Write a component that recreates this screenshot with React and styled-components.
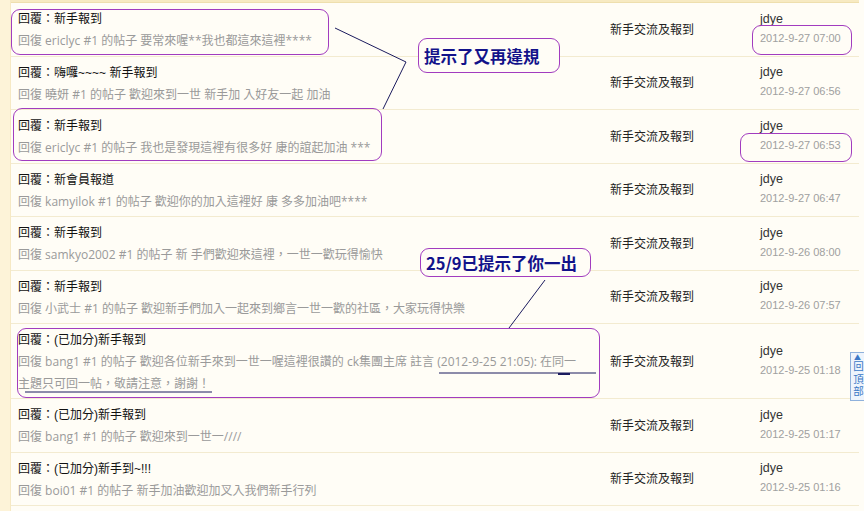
import styled, { createGlobalStyle } from 'styled-components'

const GlobalStyle = createGlobalStyle`
  html, body {
    margin: 0;
    padding: 0;
    background: #fffdf6;
  }
  body {
    font-family: 'Liberation Sans', 'Noto Sans CJK TC', sans-serif;
    font-size: 12px;
  }
`

const threads = [
  {
    title: '新手報到',
    summary: '回復 ericlyc #1 的帖子 要常來喔**我也都這來這裡****',
    date: '2012-9-27 07:00',
  },
  {
    title: '嗨囉~~~~ 新手報到',
    summary: '回復 曉妍 #1 的帖子 歡迎來到一世 新手加 入好友一起 加油',
    date: '2012-9-27 06:56',
  },
  {
    title: '新手報到',
    summary: '回復 ericlyc #1 的帖子 我也是發現這裡有很多好 康的誼起加油 ***',
    date: '2012-9-27 06:53',
  },
  {
    title: '新會員報道',
    summary: '回復 kamyilok #1 的帖子 歡迎你的加入這裡好 康 多多加油吧****',
    date: '2012-9-27 06:47',
  },
  {
    title: '新手報到',
    summary: '回復 samkyo2002 #1 的帖子 新 手們歡迎來這裡，一世一歡玩得愉快',
    date: '2012-9-26 08:00',
  },
  {
    title: '新手報到',
    summary: '回復 小武士 #1 的帖子 歡迎新手們加入一起來到鄉言一世一歡的社區，大家玩得快樂',
    date: '2012-9-26 07:57',
  },
  {
    title: '(已加分)新手報到',
    summary: [
      '回復 bang1 #1 的帖子 歡迎各位新手來到一世一喔這裡很讚的 ck集團主席 註言 (2012-9-25 21:05): 在同一',
      '主題只可回一帖，敬請注意，謝謝！',
    ],
    date: '2012-9-25 01:18',
  },
  {
    title: '(已加分)新手報到',
    summary: '回復 bang1 #1 的帖子 歡迎來到一世一////',
    date: '2012-9-25 01:17',
  },
  {
    title: '(已加分)新手到~!!!',
    summary: '回復 boi01 #1 的帖子 新手加油歡迎加叉入我們新手行列',
    date: '2012-9-25 01:16',
  },
]

// annotation marks drawn over the list (page coordinates)
const marks = [
  { x: 11, y: 9, w: 318, h: 46 },
  { x: 13, y: 108, w: 369, h: 53 },
  { x: 752, y: 25, w: 100, h: 30 },
  { x: 740, y: 133, w: 112, h: 29 },
  { x: 17, y: 328, w: 583, h: 70 },
]

export default function App() {
  return (
    <Page>
      <GlobalStyle />
      <LeftStrip />
      <Main>
        <TopBar />
        {threads.map((t, i) => (
          <Row key={i}>
            <TopicCell>
              <Title>回覆：{t.title}</Title>
              {Array.isArray(t.summary) ? (
                t.summary.map((line, j) => <Summary key={j}>{line}</Summary>)
              ) : (
                <Summary>{t.summary}</Summary>
              )}
            </TopicCell>
            <ForumCell>新手交流及報到</ForumCell>
            <AuthorCell>
              <Author>jdye</Author>
              <PostDate>{t.date}</PostDate>
            </AuthorCell>
          </Row>
        ))}
      </Main>

      <Overlay>
        {marks.map((m, i) => (
          <Mark key={i} $x={m.x} $y={m.y} $w={m.w} $h={m.h} />
        ))}
        <Callout $x={418} $y={38} $w={142} $h={35}>
          提示了又再違規
        </Callout>
        <Callout $x={420} $y={248} $w={171} $h={29}>
          25/9已提示了你一出
        </Callout>
        <Lines width="864" height="511" viewBox="0 0 864 511">
          <polyline points="335,28 406,62 383,109" />
          <line x1="545" y1="280" x2="509" y2="328" />
          <line x1="439" y1="373" x2="596" y2="373" />
          <line x1="558" y1="374" x2="570" y2="374" strokeWidth="2" />
          <line x1="25" y1="392" x2="212" y2="392" />
        </Lines>
      </Overlay>

      <BackTop>
        <Arrow>▲</Arrow>
        <BackLabel>回頂部</BackLabel>
      </BackTop>
    </Page>
  )
}

const Page = styled.div`
  position: relative;
  display: flex;
  width: 864px;
  height: 511px;
  overflow: hidden;
  background: #fffdf6;
`

const LeftStrip = styled.div`
  width: 10px;
  flex-shrink: 0;
  background: #fdf3d8;
  border-right: 1px solid #f6e9c4;
`

const Main = styled.div`
  width: 848px;
  display: flex;
  flex-direction: column;
`

const TopBar = styled.div`
  height: 2px;
  background: #f7eac2;
  border-bottom: 1px solid #eedfae;
`

const Row = styled.div`
  display: grid;
  grid-template-columns: 599px 150px 1fr;
  border-bottom: 1px solid #f3ebd0;
`

const TopicCell = styled.div`
  padding: 5px 0 4px 7px;
`

const Title = styled.div`
  line-height: 22px;
  color: #111;
  white-space: nowrap;
`

const Summary = styled.div`
  font-family: 'Open Sans', 'Noto Sans CJK TC', sans-serif;
  line-height: 21.5px;
  color: #9a9a9a;
  white-space: nowrap;
`

const ForumCell = styled.div`
  display: flex;
  align-items: center;
  color: #222;
  padding-bottom: 2px;
`

const AuthorCell = styled.div`
  display: flex;
  flex-direction: column;
  justify-content: center;
  padding-bottom: 2px;
`

const Author = styled.div`
  line-height: 19px;
  color: #333;
  font-size: 12.5px;
`

const PostDate = styled.div`
  line-height: 18px;
  color: #a0a0a0;
  font-size: 11px;
`

const Overlay = styled.div`
  position: absolute;
  inset: 0;
  pointer-events: none;
`

const Mark = styled.div`
  position: absolute;
  left: ${(p) => p.$x}px;
  top: ${(p) => p.$y}px;
  width: ${(p) => p.$w}px;
  height: ${(p) => p.$h}px;
  box-sizing: border-box;
  border: 1.5px solid #a23cbf;
  border-radius: 9px;
`

const Callout = styled.div`
  position: absolute;
  left: ${(p) => p.$x}px;
  top: ${(p) => p.$y}px;
  width: ${(p) => p.$w}px;
  height: ${(p) => p.$h}px;
  box-sizing: border-box;
  display: flex;
  align-items: center;
  padding-left: 5px;
  border: 1.5px solid #a23cbf;
  border-radius: 9px;
  background: #fffdf6;
  color: #12128a;
  font-family: 'Noto Sans CJK TC', sans-serif;
  font-weight: 700;
  font-size: 16.5px;
  white-space: nowrap;
`

const Lines = styled.svg`
  position: absolute;
  left: 0;
  top: 0;
  fill: none;
  stroke: #1b1b5e;
  stroke-width: 1;
`

const BackTop = styled.div`
  position: absolute;
  left: 850px;
  top: 352px;
  width: 16px;
  height: 49px;
  box-sizing: border-box;
  border: 1px solid #8fb1dc;
  background: #eef4fc;
  color: #3b78c6;
  font-family: 'Noto Sans CJK TC', sans-serif;
  display: flex;
  flex-direction: column;
  align-items: flex-start;
  padding-left: 1px;
`

const Arrow = styled.div`
  font-size: 7px;
  line-height: 8px;
  padding-left: 2px;
`

const BackLabel = styled.div`
  writing-mode: vertical-rl;
  font-size: 10.5px;
  line-height: 12px;
  letter-spacing: 2px;
`
